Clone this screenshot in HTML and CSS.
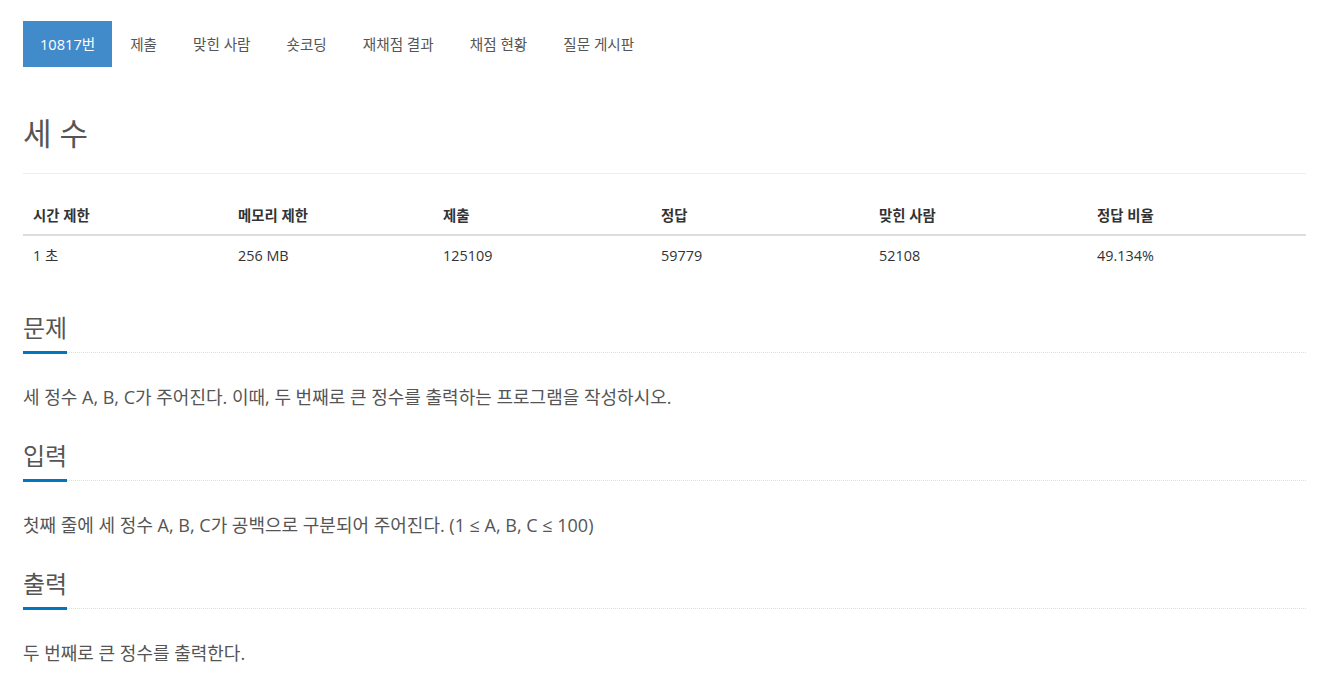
FILE: index.html
```html
<!DOCTYPE html>
<html lang="ko">
  <head>
    <meta charset="UTF-8" />
    <meta name="viewport" content="width=device-width, initial-scale=1.0" />
    <title>세 수</title>
    <link rel="stylesheet" href="styles.css">
  </head>
  <body>
    <div class="container">
      <ul class="problem-menu">
        <li class="active"><a href="#">10817번</a></li>
        <li><a href="#">제출</a></li>
        <li><a href="#">맞힌 사람</a></li>
        <li><a href="#">숏코딩</a></li>
        <li><a href="#">재채점 결과</a></li>
        <li><a href="#">채점 현황</a></li>
        <li><a href="#">질문 게시판</a></li>
      </ul>

      <div class="page-header">
        <h1 class="problem-title">세 수</h1>
      </div>

      <table class="problem-info">
        <thead>
          <tr>
            <th class="col-time">시간 제한</th>
            <th class="col-memory">메모리 제한</th>
            <th class="col-wide">제출</th>
            <th class="col-wide">정답</th>
            <th class="col-wide">맞힌 사람</th>
            <th>정답 비율</th>
          </tr>
        </thead>
        <tbody>
          <tr>
            <td>1 초</td>
            <td>256 MB</td>
            <td>125109</td>
            <td>59779</td>
            <td>52108</td>
            <td>49.134%</td>
          </tr>
        </tbody>
      </table>

      <section class="problem-section">
        <div class="headline">
          <h2>문제</h2>
        </div>
        <p class="problem-text">세 정수 A, B, C가 주어진다. 이때, 두 번째로 큰 정수를 출력하는 프로그램을 작성하시오.</p>
      </section>

      <section class="problem-section">
        <div class="headline">
          <h2>입력</h2>
        </div>
        <p class="problem-text">첫째 줄에 세 정수 A, B, C가 공백으로 구분되어 주어진다. (1 ≤ A, B, C ≤ 100)</p>
      </section>

      <section class="problem-section">
        <div class="headline">
          <h2>출력</h2>
        </div>
        <p class="problem-text">두 번째로 큰 정수를 출력한다.</p>
      </section>
    </div>
  </body>
</html>
```

FILE: styles.css
```css
* {
  margin: 0;
  padding: 0;
  box-sizing: border-box;
}

body {
  background-color: #fff;
  color: #333;
  font-family: "Open Sans", "Noto Sans CJK KR", sans-serif;
  font-size: 14px;
}

.container {
  width: 1283px;
  margin-left: 23px;
  padding-top: 21px;
}

.problem-menu {
  display: flex;
  list-style: none;
}

.problem-menu a {
  display: block;
  height: 46px;
  line-height: 46px;
  padding: 0 18px;
  color: #555;
  text-decoration: none;
  font-size: 14.6px;
}

.problem-menu .active a {
  background-color: #428bca;
  color: #fff;
  padding: 0 17px;
}

.page-header {
  margin-top: 46px;
  padding-bottom: 20px;
  border-bottom: 1px solid #eee;
}

.problem-title {
  font-size: 31px;
  font-weight: 400;
  line-height: 40px;
  color: #555;
}

.problem-info {
  width: 100%;
  margin-top: 24px;
  border-collapse: collapse;
  font-size: 14.4px;
}

.problem-info th,
.problem-info td {
  padding: 8px 10px;
  line-height: 20px;
  text-align: left;
}

.problem-info td {
  padding-top: 10px;
}

.problem-info th {
  font-weight: 700;
  border-bottom: 2px solid #ddd;
}

.problem-info .col-time,
.problem-info .col-memory {
  width: 205px;
}

.problem-info .col-wide {
  width: 218px;
}

.problem-section {
  margin-top: 41px;
}

.problem-section + .problem-section {
  margin-top: 31px;
}

.headline {
  display: flex;
  border-bottom: 1px dotted #ddd;
}

.headline h2 {
  font-size: 24px;
  font-weight: 400;
  line-height: 26px;
  color: #555;
  padding-bottom: 10px;
  border-bottom: 3px solid #0076c0;
  margin-bottom: -2px;
}

.problem-text {
  margin-top: 29px;
  font-size: 18px;
  line-height: 30px;
  color: #555;
}
```
